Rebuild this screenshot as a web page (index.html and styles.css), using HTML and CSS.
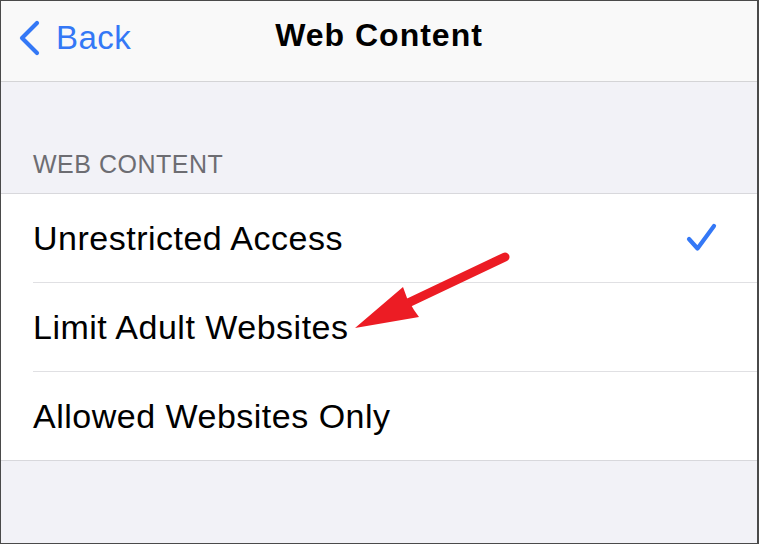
FILE: index.html
```html
<!DOCTYPE html>
<html lang="en">
<head>
    <meta charset="UTF-8">
    <meta name="viewport" content="width=device-width, initial-scale=1.0">
    <title>Web Content</title>
    <link rel="stylesheet" href="styles.css">
</head>
<body>
    <div class="screen">
        <div class="nav-bar">
            <a class="back" href="#">
                <svg class="chevron" width="22" height="36" viewBox="0 0 22 36">
                    <path d="M19 3 L4 18 L19 33" fill="none" stroke="#3478f6" stroke-width="4.2" stroke-linecap="round" stroke-linejoin="round"/>
                </svg>
                <span>Back</span>
            </a>
            <h1 class="title">Web Content</h1>
            <div></div>
        </div>

        <div class="section-header">WEB CONTENT</div>

        <ul class="options">
            <li class="option">
                <span class="label">Unrestricted Access</span>
                <svg class="check" width="34" height="32" viewBox="0 0 34 32">
                    <path d="M4 16 L12.5 25.5 L29 3" fill="none" stroke="#3478f6" stroke-width="4.2" stroke-linecap="round" stroke-linejoin="round"/>
                </svg>
            </li>
            <li class="option">
                <span class="label">Limit Adult Websites</span>
            </li>
            <li class="option">
                <span class="label">Allowed Websites Only</span>
            </li>
        </ul>

        <!-- annotation arrow drawn over the list -->
        <svg class="pointer" width="165" height="85" viewBox="350 250 165 85">
            <line x1="505" y1="257" x2="408" y2="303" stroke="#ec1c24" stroke-width="9" stroke-linecap="round"/>
            <path d="M355 328 L403 287 L407 298 L414 310 L419 317 Z" fill="#ec1c24"/>
        </svg>
    </div>
</body>
</html>
```

FILE: styles.css
```css
* {
    box-sizing: border-box;
}

body {
    margin: 0;
    font-family: "Liberation Sans", Arial, sans-serif;
}

.screen {
    position: relative;
    width: 759px;
    height: 544px;
    background: #f2f2f7;
    border: solid #4a4a4a;
    border-width: 1px 2px 1px 1px;
    overflow: hidden;
}

/* Top bar */
.nav-bar {
    display: grid;
    grid-template-columns: 1fr auto 1fr;
    align-items: start;
    height: 81px;
    padding-top: 14px;
    background: #f9f9f9;
    border-bottom: 1px solid #d4d4d6;
}

.back {
    display: flex;
    align-items: center;
    gap: 16px;
    margin-left: 17px;
    margin-top: 3px;
    height: 40px;
    color: #3478f6;
    font-size: 33px;
    letter-spacing: 0.5px;
    text-decoration: none;
}

.chevron {
    flex-shrink: 0;
}

.title {
    margin: 0;
    font-size: 32px;
    line-height: 40px;
    font-weight: 700;
    letter-spacing: 1px;
    color: #000;
}

/* Grouped list */
.section-header {
    display: flex;
    align-items: flex-end;
    height: 111px;
    padding: 0 0 14px 32px;
    font-size: 25px;
    line-height: 29px;
    letter-spacing: 0.5px;
    color: #6d6d72;
}

.options {
    list-style: none;
    margin: 0;
    padding: 0 0 0 32px;
    background: #fff;
    border-top: 1px solid #d8d8dc;
    border-bottom: 1px solid #d8d8dc;
}

.option {
    display: flex;
    align-items: center;
    height: 89px;
    padding-right: 38px;
    border-bottom: 1px solid #e0e0e3;
    font-size: 34px;
    letter-spacing: 0.5px;
    color: #000;
}

.option:last-child {
    height: 88px;
    border-bottom: none;
}

.check {
    margin-left: auto;
    margin-top: 2px;
}

.pointer {
    position: absolute;
    left: 349px;
    top: 249px;
}
```
